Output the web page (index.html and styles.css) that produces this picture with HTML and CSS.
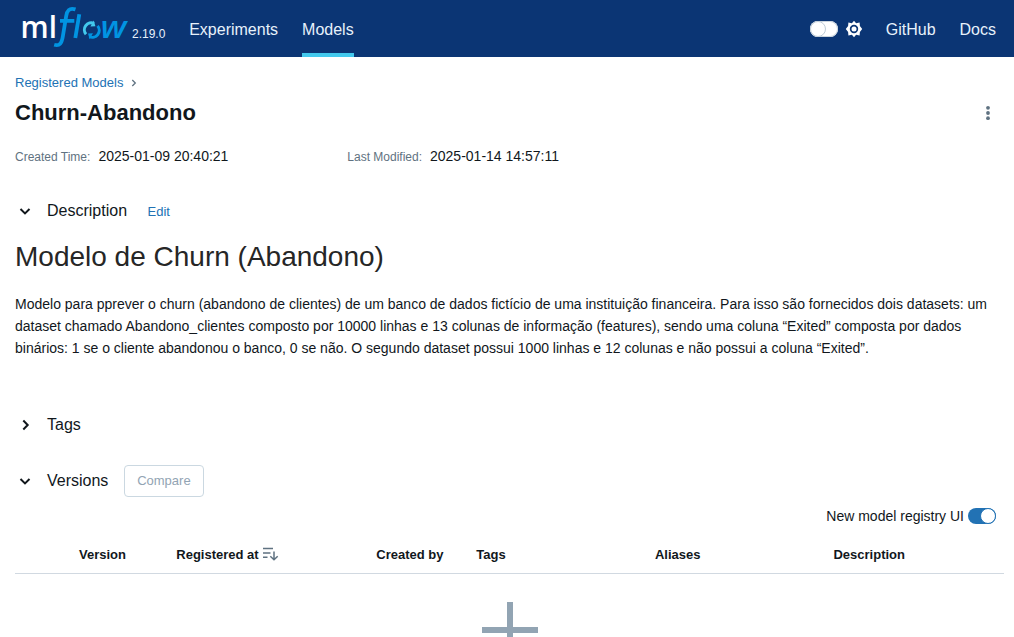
FILE: index.html
```html
<!DOCTYPE html>
<html lang="pt">
<head>
<meta charset="utf-8">
<title>Churn-Abandono - MLflow Model</title>
<link rel="stylesheet" href="styles.css">
</head>
<body>
<header class="topbar">
  <svg class="logo" width="107" height="44" viewBox="22 5 107 44" role="img" aria-label="mlflow">
    <text class="logo-ml" x="20.6" y="38" textLength="36.4" lengthAdjust="spacingAndGlyphs">ml</text>
    <g class="logo-flow">
      <path d="M75.5 9.4C69 7.4 67 11 66.2 16L62.9 36C61.8 43.2 59.6 46.4 54.2 44.8M60 20.8H74.3"/>
      <path d="M79.3 14.3L75.3 38"/>
      <text class="logo-w" x="100.5" y="38" textLength="26" lengthAdjust="spacingAndGlyphs">w</text>
    </g>
    <path class="ring light" d="M86 34.2A6.9 6.9 0 0 1 94 23.4"/>
    <path class="ring dark" d="M97.6 25.9A6.9 6.9 0 0 1 89.4 36.6"/>
    <path fill="#43c9ed" d="M93.8 20.6l1.6 5.6-5 .4z"/>
    <path fill="#0194e2" d="M89.6 39.2l-1.6-5.6 5-.4z"/>
  </svg>
  <span class="release">2.19.0</span>
  <nav class="nav"><a>Experiments</a><a class="active">Models</a></nav>
  <div class="right">
    <span class="switch off"></span>
    <svg class="gear" width="18" height="18" viewBox="0 0 18 18">
      <path fill="#fff" fill-rule="evenodd" d="M9 .8l2.1 2.5 3.5-.8.3 3.4L17.2 9l-2.3 3 -.3 3.5-3.5-.7L9 17.2l-2.1-2.4-3.5.7L3.1 12 .8 9l2.3-3.1.3-3.4 3.5.8zM9 4.8a4.2 4.2 0 1 0 0 8.4 4.2 4.2 0 0 0 0-8.4z"/>
      <circle cx="9" cy="9" r="2.5" fill="#fff"/>
    </svg>
    <a>GitHub</a><a>Docs</a>
  </div>
</header>
<main>
  <div class="crumbs"><a>Registered Models</a>
    <svg width="6" height="8" viewBox="0 0 6 8"><path d="M1.3 1L4.3 4 1.3 7" fill="none" stroke="#5f7281" stroke-width="1.3"/></svg>
  </div>
  <div class="title-row">
    <h1>Churn-Abandono</h1>
    <svg width="16" height="16" viewBox="0 0 16 16" fill="#5f7281"><circle cx="8" cy="2.8" r="1.9"/><circle cx="8" cy="8" r="1.9"/><circle cx="8" cy="13.2" r="1.9"/></svg>
  </div>
  <dl class="meta">
    <div><dt>Created Time:</dt><dd>2025-01-09 20:40:21</dd></div>
    <div><dt>Last Modified:</dt><dd>2025-01-14 14:57:11</dd></div>
  </dl>
  <section class="description">
    <div class="section-head">
      <svg class="chevron" viewBox="0 0 12 12"><path d="M1.5 4L6 8.4 10.5 4"/></svg>
      <h2>Description</h2><a class="edit">Edit</a>
    </div>
    <h3>Modelo de Churn (Abandono)</h3>
    <p>Modelo para pprever o churn (abandono de clientes) de um banco de dados fictício de uma instituição financeira. Para isso são fornecidos dois datasets: um<br>dataset chamado Abandono_clientes composto por 10000 linhas e 13 colunas de informação (features), sendo uma coluna “Exited” composta por dados<br>binários: 1 se o cliente abandonou o banco, 0 se não. O segundo dataset possui 1000 linhas e 12 colunas e não possui a coluna “Exited”.</p>
  </section>
  <section class="section-head tags">
    <svg class="chevron" viewBox="0 0 12 12"><path d="M4.3 1.5L8.7 6 4.3 10.5"/></svg>
    <h2>Tags</h2>
  </section>
  <section class="section-head versions">
    <svg class="chevron" viewBox="0 0 12 12"><path d="M1.5 4L6 8.4 10.5 4"/></svg>
    <h2>Versions</h2><button class="compare" disabled>Compare</button>
  </section>
  <div class="registry"><span>New model registry UI</span><span class="switch on"></span></div>
  <div class="table-head">
    <span></span><span>Version</span>
    <span class="sorted">Registered at
      <svg width="16" height="14" viewBox="0 0 16 14" fill="none" stroke="#5f7281" stroke-width="1.5"><path d="M0 1.5H10M0 6H7.5M0 10.3H4.5M11 4.5V12.5M7.3 9.3L11 12.8 14.7 9.3"/></svg>
    </span>
    <span>Created by</span><span>Tags</span><span>Aliases</span><span>Description</span>
  </div>
  <svg class="plus" width="56" height="56" viewBox="0 0 56 56"><path fill="#92a4b3" d="M25 0h6v25h25v6H31v25h-6V31H0v-6h25z"/></svg>
</main>
</body>
</html>
```
FILE: styles.css
```css
*, *::before { box-sizing: border-box; }
html, body { height: 100%; }
body {
  margin: 0;
  overflow: hidden;
  background: #fff;
  color: #11171c;
  font-family: "Liberation Sans", Arial, sans-serif;
  font-size: 14px;
  line-height: 20px;
}
h1, h2, h3, p, dl, dd { margin: 0; }
svg { display: block; flex: none; }

.topbar {
  display: flex;
  height: 57px;
  padding: 0 18px 0 22px;
  background: #0b3574;
  color: #e7f1fb;
}
.logo { margin-top: 5px; }
.logo text { font-family: "Open Sans", sans-serif; font-size: 31px; }
.logo-ml { fill: #fff; font-weight: 600; }
.logo-flow text { fill: #0194e2; font-style: italic; font-weight: 600; }
.logo-flow path { fill: none; stroke: #0194e2; stroke-width: 3.8; }
.ring { fill: none; stroke-width: 3; }
.light { stroke: #43c9ed; }
.dark { stroke: #0194e2; }
.release { margin: 24px 0 0 3px; font-size: 12px; }
.nav { display: flex; gap: 24px; margin-left: 23.8px; }
.nav a, .right a { height: 57px; font-size: 16px; line-height: 60px; }
.nav .active { border-bottom: 4px solid #43c9ed; }
.right { display: flex; align-items: center; margin-left: auto; }
.right a { margin-left: 24px; }
.gear { margin-left: 7px; margin-right: -1px; }
.switch {
  display: flex;
  width: 28px;
  height: 16px;
  border-radius: 8px;
  background: #fff;
  box-shadow: inset 0 0 0 1px #cbd5de;
}
.switch::before {
  content: "";
  width: 16px;
  height: 16px;
  border: 1px solid #c0cdd8;
  border-radius: 50%;
  background: #fff;
}
.on { justify-content: flex-end; background: #2272b4; box-shadow: none; }
.on::before { border-color: #2272b4; }

main { padding: 16px 10px 0 15px; }
a { color: inherit; }
.crumbs { display: flex; align-items: center; gap: 8px; font-size: 13px; }
.crumbs a, .edit { color: #2272b4; }
.title-row {
  display: flex;
  align-items: center;
  justify-content: space-between;
  height: 28px;
  margin-top: 6px;
  padding-right: 8px;
}
h1 { font-size: 22px; line-height: 28px; }
.meta { display: grid; grid-template-columns: 332.3px 1fr; margin-top: 19px; }
.meta div { display: flex; align-items: baseline; gap: 8px; }
dt { color: #5f7281; font-size: 12px; }
.section-head { display: flex; align-items: center; height: 32px; padding-left: 4px; }
.chevron { width: 12px; height: 12px; fill: none; stroke: #11171c; stroke-width: 2; }
h2 { margin-left: 16px; font-size: 16px; font-weight: 400; line-height: 24px; }
.description { margin-top: 28px; }
.edit { margin-left: 20.5px; padding-top: 1px; font-size: 13px; }
h3 { margin-top: 12px; color: #262626; font-size: 28px; font-weight: 400; line-height: 36px; }
p { margin-top: 18px; line-height: 22px; white-space: nowrap; }
.tags { margin-top: 50px; }
.versions { margin-top: 24px; }
.compare {
  width: 80px;
  height: 32px;
  margin-left: 16px;
  padding: 0 1px 2px 0;
  border: 1px solid #cbd8e1;
  border-radius: 4px;
  background: #fff;
  color: #92a4b3;
  font: 13px "Liberation Sans", Arial, sans-serif;
}
.registry { display: flex; justify-content: flex-end; gap: 4px; align-items: center; margin-top: 9px; padding-right: 8px; }
.table-head {
  display: grid;
  grid-template-columns: 64px 97.3px 200px 100px 178.7px 178.5px 1fr;
  align-items: center;
  height: 38px;
  margin-top: 10px;
  border-bottom: 1px solid #d1d9e1;
  font-size: 13px;
  font-weight: 700;
}
.sorted { display: flex; align-items: center; gap: 4.5px; }
.sorted svg { margin-top: -2px; }
.plus { margin: 28px 0 0 467px; }
```
